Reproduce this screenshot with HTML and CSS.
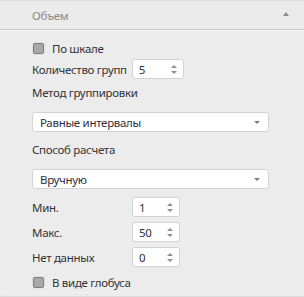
FILE: index.html
```html
<!DOCTYPE html>
<html lang="ru">
<head>
  <meta charset="UTF-8" />
  <title>Объем</title>
  <link rel="stylesheet" href="styles.css">
</head>
<body>

<div class="panel">
  <div class="panel-head">
    <span class="panel-title">Объем</span>
    <span class="collapse-arrow"></span>
  </div>

  <div class="panel-body">
    <label class="check-row first">
      <span class="check-box"></span>
      <span>По шкале</span>
    </label>

    <div class="count-row">
      <span>Количество групп</span>
      <div class="spinner wide">
        <span class="spin-value">5</span>
        <span class="spin-arrows"><i class="up"></i><i class="down"></i></span>
      </div>
    </div>

    <div class="field-label">Метод группировки</div>
    <div class="select">
      <span>Равные интервалы</span>
      <span class="select-arrow"></span>
    </div>

    <div class="field-label">Способ расчета</div>
    <div class="select">
      <span>Вручную</span>
      <span class="select-arrow"></span>
    </div>

    <div class="range-rows">
      <div class="range-row">
        <span class="range-label">Мин.</span>
        <div class="spinner">
          <span class="spin-value">1</span>
          <span class="spin-arrows"><i class="up"></i><i class="down"></i></span>
        </div>
      </div>
      <div class="range-row">
        <span class="range-label">Макс.</span>
        <div class="spinner">
          <span class="spin-value">50</span>
          <span class="spin-arrows"><i class="up"></i><i class="down"></i></span>
        </div>
      </div>
      <div class="range-row">
        <span class="range-label">Нет данных</span>
        <div class="spinner">
          <span class="spin-value">0</span>
          <span class="spin-arrows"><i class="up"></i><i class="down"></i></span>
        </div>
      </div>
    </div>

    <label class="check-row last">
      <span class="check-box"></span>
      <span>В виде глобуса</span>
    </label>
  </div>
  <div class="panel-foot"></div>
</div>

</body>
</html>
```

FILE: styles.css
```css
html, body {
  margin: 0; padding: 0; height: 100%;
  font-family: "Noto Sans", "Open Sans", sans-serif;
  font-size: 11.5px;
  letter-spacing: -0.3px;
  background: #ececed; color: #333;
  overflow: hidden;
}

.panel { height: 297px; display: flex; flex-direction: column; }

.panel-head {
  height: 28px;
  border-top: 1px solid #dcdcdc;
  border-bottom: 1px solid #c9c9c9;
  box-shadow: 0 1px 0 #f6f6f6;
  display: flex; align-items: center; justify-content: space-between;
  padding: 0 15px 0 32px;
  background: #ebebec;
}
.panel-title { color: #8a8a8a; }
.collapse-arrow {
  width: 0; height: 0;
  border-left: 3px solid transparent;
  border-right: 3px solid transparent;
  border-bottom: 4px solid #8c8c8c;
  margin-top: -2px;
}

.panel-body {
  flex: 1;
  padding: 8px 35px 0 32px;
  display: flex; flex-direction: column;
}

.check-row {
  height: 20px;
  display: flex; align-items: center; gap: 8px;
  padding-left: 1px;
}
.check-row.last { margin-top: 5px; }
.check-box {
  width: 9px; height: 9px;
  background: #a9a9a9;
  border: 1px solid #7d7d7d;
  border-radius: 2px;
  box-shadow: 0 0 0 1px #e2e2e2;
}

.count-row {
  margin-top: 1px;
  display: flex; align-items: center; gap: 5px;
}

.spinner {
  height: 18px;
  background: #fff;
  border: 1px solid #d3d3d3;
  border-radius: 3px;
  display: flex; align-items: center; justify-content: space-between;
  padding: 0 6px 0 6px;
  box-sizing: content-box;
  width: 34px;
}
.spinner.wide { width: 38px; }
.spin-value { color: #2f2f3a; }
.spin-arrows { display: flex; flex-direction: column; gap: 3px; }
.spin-arrows i {
  display: block; width: 0; height: 0;
  border-left: 3px solid transparent;
  border-right: 3px solid transparent;
}
.spin-arrows .up { border-bottom: 3px solid #8e8e8e; }
.spin-arrows .down { border-top: 3px solid #8e8e8e; }

.field-label {
  height: 20px; line-height: 20px;
  margin-top: 4px;
}
.select + .field-label { margin-top: 8px; }

.select {
  margin-top: 9px;
  height: 18px;
  background: #fff;
  border: 1px solid #d3d3d3;
  border-radius: 3px;
  display: flex; align-items: center; justify-content: space-between;
  padding: 0 8px 0 7px;
  color: #2f2f3a;
}
.select-arrow {
  width: 0; height: 0;
  border-left: 3px solid transparent;
  border-right: 3px solid transparent;
  border-top: 3px solid #808080;
}

.range-rows {
  margin-top: 8px;
  display: flex; flex-direction: column; gap: 5px;
}
.range-row { display: flex; align-items: center; }
.range-label { width: 100px; }

.panel-foot {
  height: 3px;
  border-top: 1px dotted #f8f8f8;
  border-bottom: 1px solid #dcdcdc;
}
```
